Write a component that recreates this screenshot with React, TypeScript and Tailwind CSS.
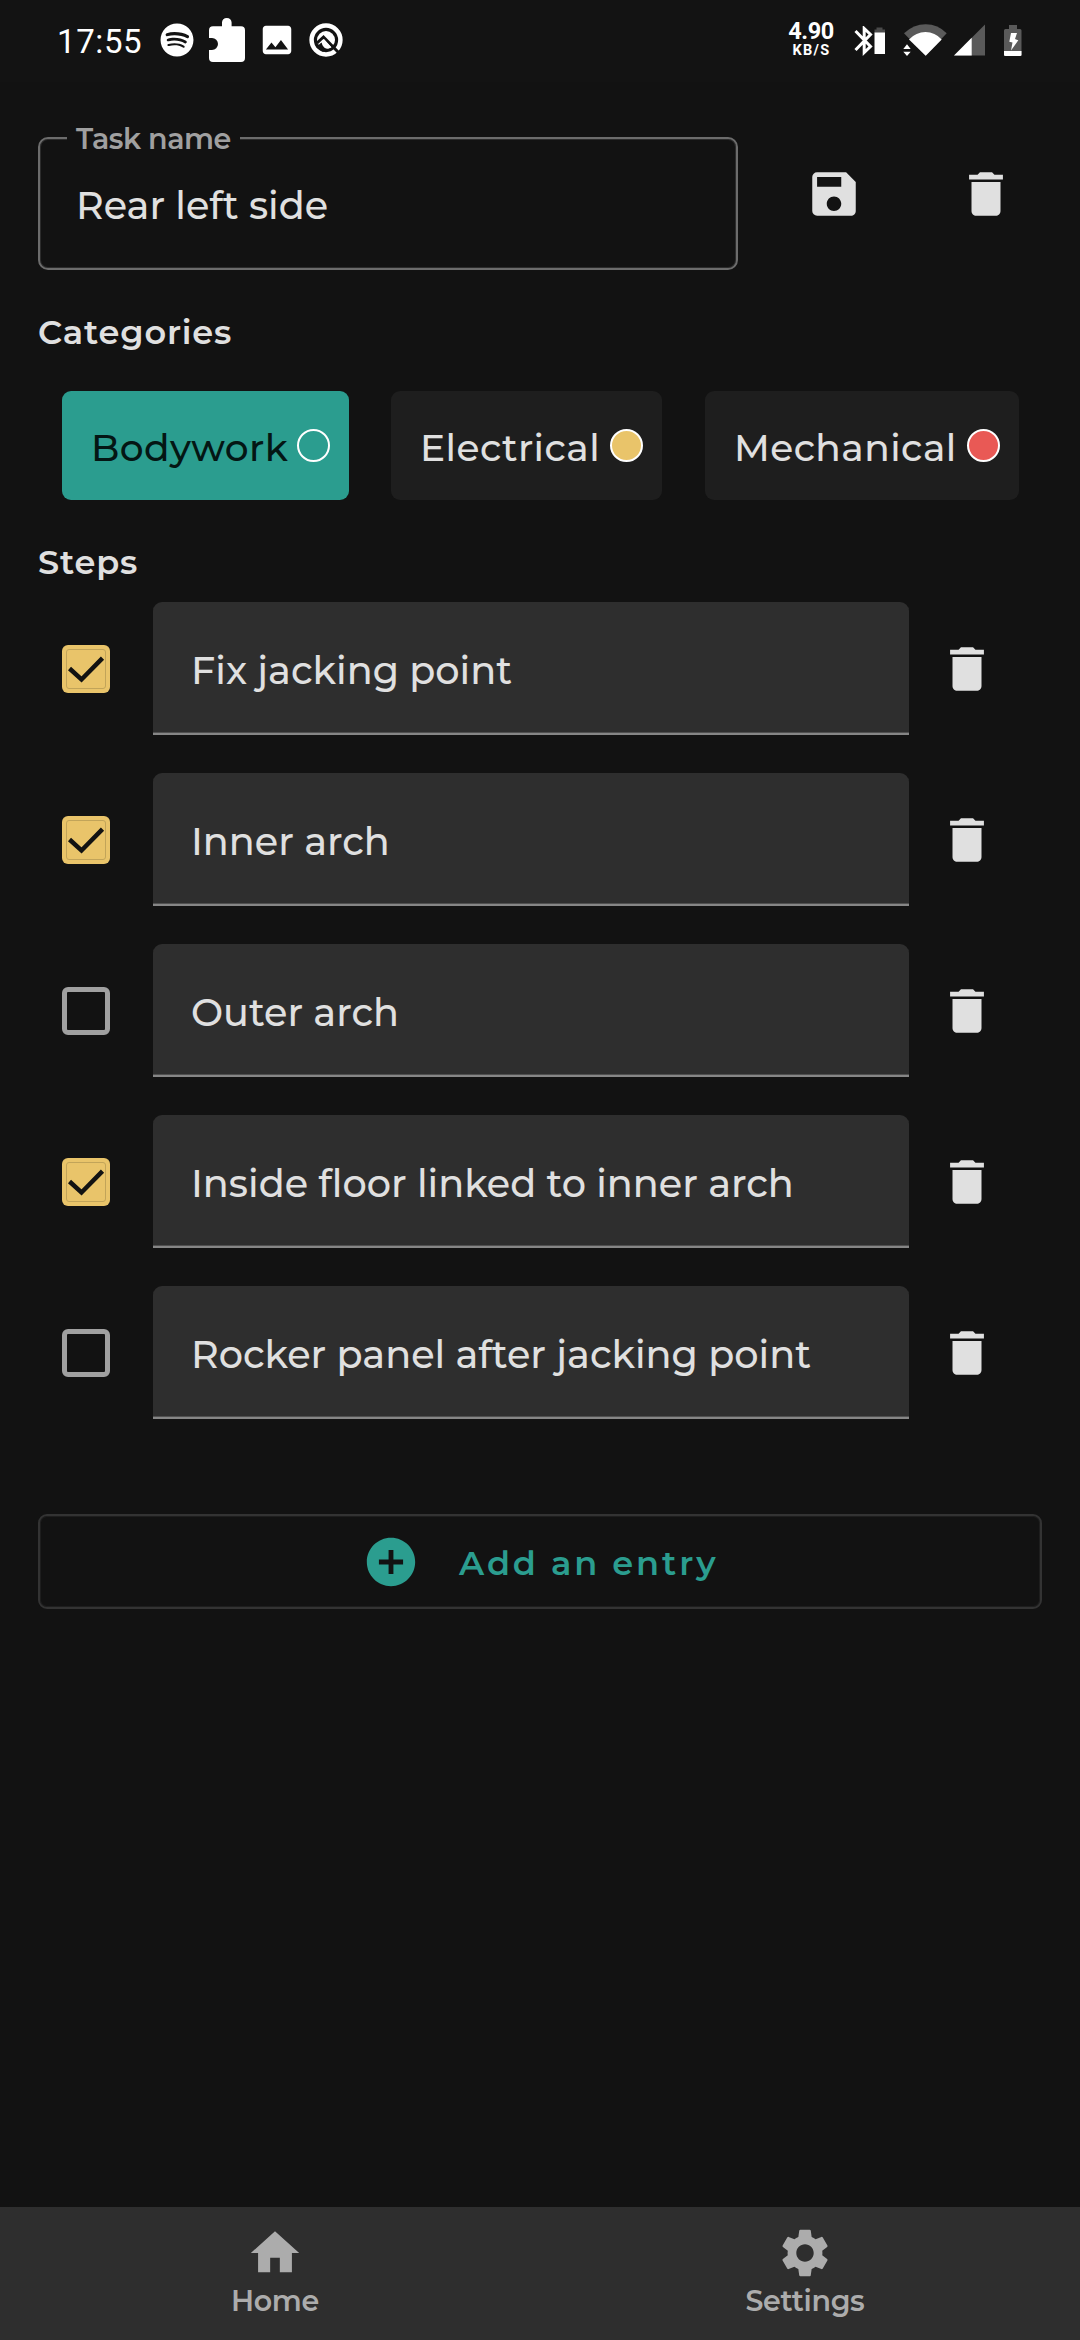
import React from "react";
import { FaSpotify } from "react-icons/fa";
import { MdAddCircle, MdDelete, MdHome, MdImage, MdSave, MdSettings } from "react-icons/md";

type Category = { name: string; chip: string; dot: string };
type Step = { label: string; done: boolean };

const categories: Category[] = [
  { name: "Bodywork", chip: "w-[287px] bg-[#2b9d8f] text-[#041614]", dot: "bg-[#2b9d8f]" },
  { name: "Electrical", chip: "ml-[42px] w-[271px] bg-[#1e1e1e] text-[#e0e0e0]", dot: "bg-[#e9c46a]" },
  { name: "Mechanical", chip: "ml-[43px] w-[314px] bg-[#1e1e1e] text-[#e0e0e0]", dot: "bg-[#e95955]" },
];

const steps: Step[] = [
  { label: "Fix jacking point", done: true },
  { label: "Inner arch", done: true },
  { label: "Outer arch", done: false },
  { label: "Inside floor linked to inner arch", done: true },
  { label: "Rocker panel after jacking point", done: false },
];

function PuzzleIcon() {
  return (
    <svg className="ml-[15px] mt-[18px] h-[44px] w-[36px]" viewBox="0 0 36 44" fill="#fff">
      <path d="M4 8.3H13V4.5C13 1.8 15 0 17.8 0S22.600 1.800 22.600 4.500V8.300H32Q36 8.300 36 12.300V40Q36 44 32 44H4Q0 44 0 40V32H3A6 6 0 0 0 3 20H0V12.300Q0 8.300 4 8.300Z" />
    </svg>
  );
}

function QIcon() {
  return (
    <svg className="ml-[13px] mt-[23px] h-[34px] w-[34px]" viewBox="0 0 34 34" fill="none">
      <circle cx="17" cy="17" r="14.400" stroke="#fff" strokeWidth="4.500" />
      <circle cx="17" cy="17" r="9" fill="#fff" />
      <path d="M8 20L14.500 14L30 30" stroke="#131313" strokeWidth="3" />
      <path d="M7 24L12.500 19.500L19 26L14 29Z" fill="#131313" />
      <path d="M12.500 18L15 16L22.500 24.500L18 25.800Q13 25 12.500 18Z" fill="#fff" />
    </svg>
  );
}

function BluetoothIcon() {
  return (
    <svg className="absolute left-[854px] top-[26px] h-[30px] w-[32px]" viewBox="0 0 32 30">
      <path d="M1.500 5L16.500 20.500L10.200 26.500V2.500L16.500 8.500L1.500 24" fill="none" stroke="#fff" strokeWidth="3" />
      <path d="M22.500 1.500H28.500V3.500H31V7H20.500V3.500H22.500Z" fill="#4a4a4a" />
      <path d="M20.500 6.500H31V28H20.500Z" fill="#fff" />
    </svg>
  );
}

function StatusBar() {
  return (
    <header className="relative flex h-[82px] items-start bg-[#131313] pl-[57px] text-white">
      <span className="mt-[25px] w-[103px] font-['Roboto',sans-serif] text-[33px] leading-[34px] tracking-[0.6px]">17:55</span>
      <FaSpotify className="mt-[23px] h-[34px] w-[34px]" />
      <PuzzleIcon />
      <MdImage className="ml-[13px] mt-[21px] h-[38px] w-[38px]" />
      <QIcon />
      <div className="absolute left-[781px] top-[19px] flex w-[60px] flex-col items-center font-['Roboto',sans-serif] font-bold">
        <span className="text-[23.500px] leading-[24px] tracking-[-0.5px]">4.90</span>
        <span className="pl-px pt-px text-[14.500px] leading-[14px] tracking-[1.3px]">KB/S</span>
      </div>
      <BluetoothIcon />
      <svg className="absolute left-[903px] top-[24px] h-[33px] w-[45px]" viewBox="0 0 45 33">
        <path d="M1 9.300Q10.500 .3 22.700 .3T43.700 9.300L22.700 31.700Z" fill="#5a5a5a" />
        <path d="M0 14.500L6.300 14.800L22 32H9V19H0Z" fill="#131313" />
        <path d="M6 15.500Q13 8 22.500 8T38.700 15.500L22.700 31.700Z" fill="#fff" />
        <path d="M.3 25L4 20.300L7.700 25ZM.3 27.700H7.700L4 32Z" fill="#fff" />
      </svg>
      <svg className="absolute left-[954px] top-[24px] h-[32px] w-[31px]" viewBox="0 0 31 32">
        <path d="M0 31.500L31 .5V31.500Z" fill="#5a5a5a" />
        <path d="M0 31.500L17.700 13.800V31.500Z" fill="#fff" />
      </svg>
      <svg className="absolute left-[1004px] top-[25px] h-[31px] w-[18px]" viewBox="0 0 18 31">
        <path d="M5 0H13V4H16Q17.500 4 17.500 5.500V31H0V5.500Q0 4 1.500 4H5Z" fill="#5a5a5a" />
        <path d="M0 26H17.500V29.500Q17.500 31 16 31H1.500Q0 31 0 29.500Z" fill="#fff" />
        <path d="M7 8H13L11 14L14.300 15.300L7 25.500L8.500 17.500L5.300 16.800Z" fill="#fff" />
      </svg>
    </header>
  );
}

function Checkbox({ done }: { done: boolean }) {
  if (!done) {
    return <span className="h-[48px] w-[48px] rounded-[6px] border-[5px] border-[#a0a0a0]" />;
  }
  return (
    <span className="h-[48px] w-[48px] rounded-[6px] bg-[#e9c46a] p-[4px]">
      <span className="flex h-[40px] w-[40px] rounded-[3px] border border-[#c2a459]">
        <svg className="h-[38px] w-[38px]" viewBox="0 0 38 38" fill="none">
          <path d="M2.500 18.500L14.500 29.500L35.500 8.200" stroke="#121212" strokeWidth="4.500" />
        </svg>
      </span>
    </span>
  );
}

function StepRow({ step }: { step: Step }) {
  return (
    <li className="flex h-[133px] items-center pl-[24px]">
      <Checkbox done={step.done} />
      <div className="ml-[43px] flex h-[133px] w-[756px] items-center rounded-t-[9px] bg-[#2e2e2e] pl-[38px] pt-[5px] text-[38.200px] font-medium leading-[48px] shadow-[inset_0_-2px_0_#868686,inset_0_-3px_0_#505050]">
        {step.label}
      </div>
      <MdDelete className="ml-[29px] h-[58px] w-[58px]" />
    </li>
  );
}

function NavItem({ icon, label }: { icon: React.ReactNode; label: string }) {
  return (
    <a className="flex flex-1 flex-col items-center pt-[17px] text-[#acacac]">
      {icon}
      <span className="mt-[4px] text-[28.500px] font-semibold leading-[30px] tracking-[-0.35px]">{label}</span>
    </a>
  );
}

export default function App() {
  return (
    <div className="flex h-[2340px] w-[1080px] flex-col overflow-hidden bg-[#121212] font-['Montserrat','Inter',sans-serif] text-[#e0e0e0]">
      <StatusBar />
      <main className="flex-1 px-[38px] pt-[55px]">
        <div className="flex items-start">
          <div className="relative h-[133px] w-[700px] rounded-[10px] border-2 border-[#6c6c6c] pl-[36px] pt-[43px] shadow-[inset_0_0_0_1px_#2c2c2c]">
            <span className="absolute left-[27px] top-[-18px] w-[173px] bg-[#121212] pl-[9px] text-[28.500px] font-semibold leading-[36px] tracking-[-0.450px] text-[#a0a0a0]">Task name</span>
            <p className="text-[38.200px] font-medium leading-[48px]">Rear left side</p>
          </div>
          <MdSave className="ml-[67px] mt-[28px] h-[58px] w-[58px]" />
          <MdDelete className="ml-[94px] mt-[28px] h-[58px] w-[58px]" />
        </div>

        <h2 className="mt-[42px] text-[33.600px] font-semibold leading-[40px] tracking-[0.850px]">Categories</h2>
        <div className="mt-[39px] flex pl-[24px]">
          {categories.map((c) => (
            <div key={c.name} className={`flex h-[109px] items-center justify-between rounded-[9px] pl-[29px] pr-[19px] ${c.chip}`}>
              <span className="pt-[4px] text-[37.500px] font-medium leading-[48px] tracking-[0.450px]">{c.name}</span>
              <span className={`h-[33px] w-[33px] rounded-full border-[2px] border-white ${c.dot}`} />
            </div>
          ))}
        </div>

        <h2 className="mt-[42px] text-[33.600px] font-semibold leading-[40px] tracking-[0.850px]">Steps</h2>
        <ul className="mt-[20px] flex flex-col gap-[38px]">
          {steps.map((s) => (
            <StepRow key={s.label} step={s} />
          ))}
        </ul>

        <button className="mt-[95px] flex h-[95px] w-full items-center rounded-[9px] border-2 border-[#333333] pl-[322px] text-[#2b9d8f] shadow-[inset_0_0_0_1px_#1e1e1e]">
          <MdAddCircle className="h-[58px] w-[58px]" />
          <span className="ml-[39px] pt-[3px] text-[33.600px] font-semibold leading-[40px] tracking-[2.900px]">Add an entry</span>
        </button>
      </main>
      <nav className="flex h-[133px] bg-[#2e2e2e] px-[10px]">
        <NavItem icon={<MdHome className="h-[58px] w-[58px]" />} label="Home" />
        <NavItem icon={<MdSettings className="h-[58px] w-[58px]" />} label="Settings" />
      </nav>
    </div>
  );
}
